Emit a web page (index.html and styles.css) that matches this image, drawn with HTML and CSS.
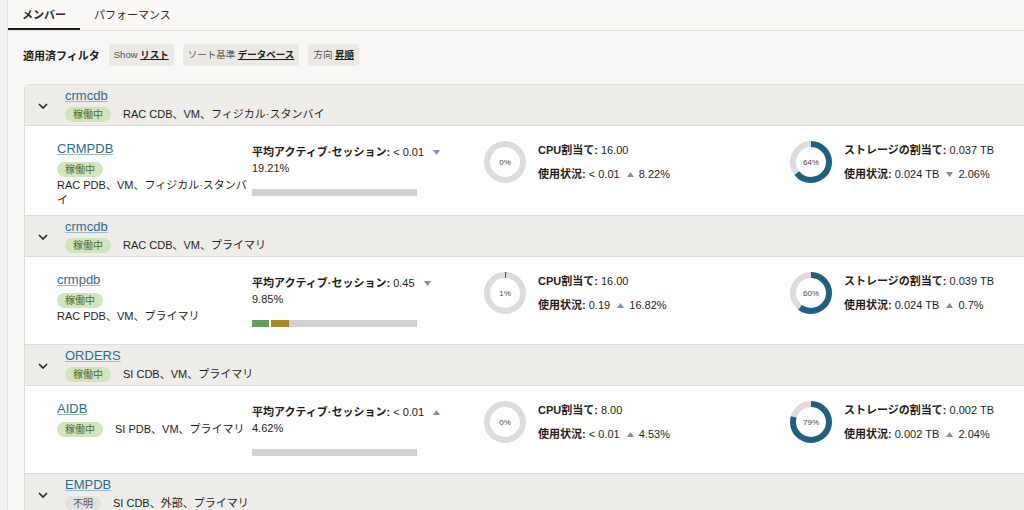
FILE: index.html
```html
<!DOCTYPE html>
<html lang="ja">
<head>
    <meta charset="UTF-8">
    <title>メンバー</title>
    <link rel="stylesheet" href="styles.css">
</head>
<body>
<div class="page">
    <div class="tabs">
        <a class="tab active">メンバー</a>
        <a class="tab">パフォーマンス</a>
    </div>

    <div class="filters">
        <span class="filters-label">適用済フィルタ</span>
        <span class="chip">Show <b>リスト</b></span>
        <span class="chip">ソート基準 <b>データベース</b></span>
        <span class="chip">方向 <b>昇順</b></span>
    </div>

    <div class="list">
        <!-- crmcdb / standby -->
        <div class="group-head">
            <span class="chevron"><svg width="10" height="6" viewBox="0 0 10 6"><path d="M1 1l4 4 4-4"/></svg></span>
            <div class="group-info">
                <a class="db-link">crmcdb</a>
                <div class="meta">
                    <span class="badge ok">稼働中</span>
                    <span class="desc">RAC CDB、VM、フィジカル·スタンバイ</span>
                </div>
            </div>
        </div>
        <div class="member">
            <div class="col-name">
                <a class="db-link">CRMPDB</a>
                <div class="meta">
                    <span class="badge ok">稼働中</span>
                    <span class="desc">RAC PDB、VM、フィジカル·スタンバイ</span>
                </div>
            </div>
            <div class="col-session">
                <div><b>平均アクティブ·セッション:</b> &lt; 0.01 <svg class="tri" width="7" height="5" viewBox="0 0 7 5"><polygon points="0,0 7,0 3.5,5"/></svg></div>
                <div>19.21%</div>
                <div class="bar"></div>
            </div>
            <div class="col-metric">
                <svg class="donut" width="42" height="42" viewBox="0 0 42 42"><circle class="track" cx="21" cy="21" r="18"/><text x="21" y="24">0%</text></svg>
                <div class="metric-text">
                    <div><b>CPU割当て:</b> 16.00</div>
                    <div><b>使用状況:</b> &lt; 0.01 <span class="trend"><svg class="tri" width="7" height="5" viewBox="0 0 7 5"><polygon points="0,5 7,5 3.5,0"/></svg> 8.22%</span></div>
                </div>
            </div>
            <div class="col-metric">
                <svg class="donut" width="42" height="42" viewBox="0 0 42 42"><circle class="track" cx="21" cy="21" r="18"/><circle class="fill" cx="21" cy="21" r="18" stroke-dasharray="72.4 113.1" transform="rotate(-90 21 21)"/><text x="21" y="24">64%</text></svg>
                <div class="metric-text">
                    <div><b>ストレージの割当て:</b> 0.037 TB</div>
                    <div><b>使用状況:</b> 0.024 TB <span class="trend"><svg class="tri" width="7" height="5" viewBox="0 0 7 5"><polygon points="0,0 7,0 3.5,5"/></svg> 2.06%</span></div>
                </div>
            </div>
        </div>

        <!-- crmcdb / primary -->
        <div class="group-head">
            <span class="chevron"><svg width="10" height="6" viewBox="0 0 10 6"><path d="M1 1l4 4 4-4"/></svg></span>
            <div class="group-info">
                <a class="db-link">crmcdb</a>
                <div class="meta">
                    <span class="badge ok">稼働中</span>
                    <span class="desc">RAC CDB、VM、プライマリ</span>
                </div>
            </div>
        </div>
        <div class="member">
            <div class="col-name">
                <a class="db-link">crmpdb</a>
                <div class="meta">
                    <span class="badge ok">稼働中</span>
                    <span class="desc">RAC PDB、VM、プライマリ</span>
                </div>
            </div>
            <div class="col-session">
                <div><b>平均アクティブ·セッション:</b> 0.45 <svg class="tri" width="7" height="5" viewBox="0 0 7 5"><polygon points="0,0 7,0 3.5,5"/></svg></div>
                <div>9.85%</div>
                <div class="bar"><span class="seg green" style="width: 17px"></span><span class="seg olive" style="width: 18px"></span></div>
            </div>
            <div class="col-metric">
                <svg class="donut" width="42" height="42" viewBox="0 0 42 42"><circle class="track" cx="21" cy="21" r="18"/><circle class="fill" cx="21" cy="21" r="18" stroke-dasharray="1.13 113.1" transform="rotate(-90 21 21)"/><text x="21" y="24">1%</text></svg>
                <div class="metric-text">
                    <div><b>CPU割当て:</b> 16.00</div>
                    <div><b>使用状況:</b> 0.19 <span class="trend"><svg class="tri" width="7" height="5" viewBox="0 0 7 5"><polygon points="0,5 7,5 3.5,0"/></svg> 16.82%</span></div>
                </div>
            </div>
            <div class="col-metric">
                <svg class="donut" width="42" height="42" viewBox="0 0 42 42"><circle class="track" cx="21" cy="21" r="18"/><circle class="fill" cx="21" cy="21" r="18" stroke-dasharray="67.9 113.1" transform="rotate(-90 21 21)"/><text x="21" y="24">60%</text></svg>
                <div class="metric-text">
                    <div><b>ストレージの割当て:</b> 0.039 TB</div>
                    <div><b>使用状況:</b> 0.024 TB <span class="trend"><svg class="tri" width="7" height="5" viewBox="0 0 7 5"><polygon points="0,5 7,5 3.5,0"/></svg> 0.7%</span></div>
                </div>
            </div>
        </div>

        <!-- ORDERS -->
        <div class="group-head">
            <span class="chevron"><svg width="10" height="6" viewBox="0 0 10 6"><path d="M1 1l4 4 4-4"/></svg></span>
            <div class="group-info">
                <a class="db-link">ORDERS</a>
                <div class="meta">
                    <span class="badge ok">稼働中</span>
                    <span class="desc">SI CDB、VM、プライマリ</span>
                </div>
            </div>
        </div>
        <div class="member">
            <div class="col-name">
                <a class="db-link">AIDB</a>
                <div class="meta">
                    <span class="badge ok">稼働中</span>
                    <span class="desc">SI PDB、VM、プライマリ</span>
                </div>
            </div>
            <div class="col-session">
                <div><b>平均アクティブ·セッション:</b> &lt; 0.01 <svg class="tri" width="7" height="5" viewBox="0 0 7 5"><polygon points="0,5 7,5 3.5,0"/></svg></div>
                <div>4.62%</div>
                <div class="bar"></div>
            </div>
            <div class="col-metric">
                <svg class="donut" width="42" height="42" viewBox="0 0 42 42"><circle class="track" cx="21" cy="21" r="18"/><text x="21" y="24">0%</text></svg>
                <div class="metric-text">
                    <div><b>CPU割当て:</b> 8.00</div>
                    <div><b>使用状況:</b> &lt; 0.01 <span class="trend"><svg class="tri" width="7" height="5" viewBox="0 0 7 5"><polygon points="0,5 7,5 3.5,0"/></svg> 4.53%</span></div>
                </div>
            </div>
            <div class="col-metric">
                <svg class="donut" width="42" height="42" viewBox="0 0 42 42"><circle class="track" cx="21" cy="21" r="18"/><circle class="fill" cx="21" cy="21" r="18" stroke-dasharray="89.4 113.1" transform="rotate(-90 21 21)"/><text x="21" y="24">79%</text></svg>
                <div class="metric-text">
                    <div><b>ストレージの割当て:</b> 0.002 TB</div>
                    <div><b>使用状況:</b> 0.002 TB <span class="trend"><svg class="tri" width="7" height="5" viewBox="0 0 7 5"><polygon points="0,5 7,5 3.5,0"/></svg> 2.04%</span></div>
                </div>
            </div>
        </div>

        <!-- EMPDB -->
        <div class="group-head">
            <span class="chevron"><svg width="10" height="6" viewBox="0 0 10 6"><path d="M1 1l4 4 4-4"/></svg></span>
            <div class="group-info">
                <a class="db-link">EMPDB</a>
                <div class="meta">
                    <span class="badge unknown">不明</span>
                    <span class="desc">SI CDB、外部、プライマリ</span>
                </div>
            </div>
        </div>
    </div>
</div>
</body>
</html>
```

FILE: styles.css
```css
html, body {
    margin: 0;
    height: 100%;
    overflow: hidden;
}

body {
    font-family: "Liberation Sans", "Noto Sans CJK JP", sans-serif;
    font-size: 11px;
    color: #1f1d1b;
    background-color: #f4f3f1;
}

.page {
    margin-left: 7px;
    border-left: 1px solid #e3e1de;
    background-color: #f9f8f7;
    min-height: 100%;
}

/* tabs */
.tabs {
    display: flex;
    height: 30px;
    border-bottom: 1px solid #dfddda;
}

.tab {
    box-sizing: border-box;
    height: 30px;
    padding: 0 14px;
    line-height: 30px;
    color: #2b2926;
    border-bottom: 2px solid transparent;
}

.tab.active {
    border-bottom-color: #1f1d1b;
    font-weight: 700;
}

/* applied filters */
.filters {
    display: flex;
    align-items: center;
    gap: 9px;
    padding: 13px 0 0 15px;
}

.filters-label {
    font-weight: 700;
}

.chip {
    height: 22px;
    line-height: 22px;
    padding: 0 5px;
    border-radius: 4px;
    background-color: #ebe9e6;
    color: #55524e;
    font-size: 9.5px;
}

.chip b {
    color: #1f1d1b;
    text-decoration: underline;
}

/* list */
.list {
    margin: 18px -4px 0 16px;
    border: 1px solid #dedcd9;
    border-radius: 6px 0 0 0;
    overflow: hidden;
}

.group-head {
    display: flex;
    align-items: center;
    gap: 12px;
    height: 40px;
    padding-left: 8px;
    background-color: #efedea;
    border-bottom: 1px solid #dedcd9;
}

.chevron {
    width: 20px;
    display: flex;
    justify-content: center;
    margin-top: 2px;
}

.chevron path {
    fill: none;
    stroke: #2b2926;
    stroke-width: 1.7;
}

.group-info .meta {
    margin-top: 3px;
}

.db-link {
    display: block;
    font-size: 13px;
    line-height: 16px;
    color: #2e6b8a;
    text-decoration: underline;
    text-decoration-color: #9bb8c8;
}

.meta {
    display: flex;
    flex-wrap: wrap;
    align-items: center;
    column-gap: 12px;
    row-gap: 1px;
}

.badge {
    height: 15px;
    line-height: 15px;
    padding: 0 8px;
    border-radius: 8px;
    font-size: 10px;
}

.badge.ok {
    background-color: #d2e4bd;
    color: #4d6b31;
}

.badge.unknown {
    background-color: #e3e1de;
    color: #57534f;
}

.desc {
    line-height: 15px;
}

.member {
    display: grid;
    grid-template-columns: 195px 232px 306px 1fr;
    min-height: 88px;
    box-sizing: border-box;
    padding: 15px 0 7px 32px;
    background-color: #fff;
    border-bottom: 1px solid #dedcd9;
}

.col-name .meta {
    margin-top: 5px;
}

.col-session {
    line-height: 16px;
    padding-top: 3px;
}

.tri {
    fill: #8a89b6;
    margin-left: 6px;
    vertical-align: 1px;
}

.bar {
    display: flex;
    width: 165px;
    height: 7px;
    margin-top: 13px;
    background-color: #d2d2d2;
}

.seg.green {
    background-color: #6a9a5c;
    border-right: 2px solid #fff;
}

.seg.olive {
    background-color: #a08a2a;
}

.col-metric {
    display: flex;
    align-items: center;
    align-self: start;
    gap: 12px;
    height: 44px;
    margin-top: -1px;
}

.donut .track {
    fill: none;
    stroke: #dcdcdc;
    stroke-width: 6;
}

.donut .fill {
    fill: none;
    stroke: #215f81;
    stroke-width: 6;
}

.donut text {
    font-size: 8px;
    fill: #4a4744;
    text-anchor: middle;
}

.metric-text {
    line-height: 16px;
    display: flex;
    flex-direction: column;
    gap: 8px;
}

.trend {
    margin-left: 4px;
}

.trend .tri {
    margin-left: 0;
    margin-right: 2px;
}
```
